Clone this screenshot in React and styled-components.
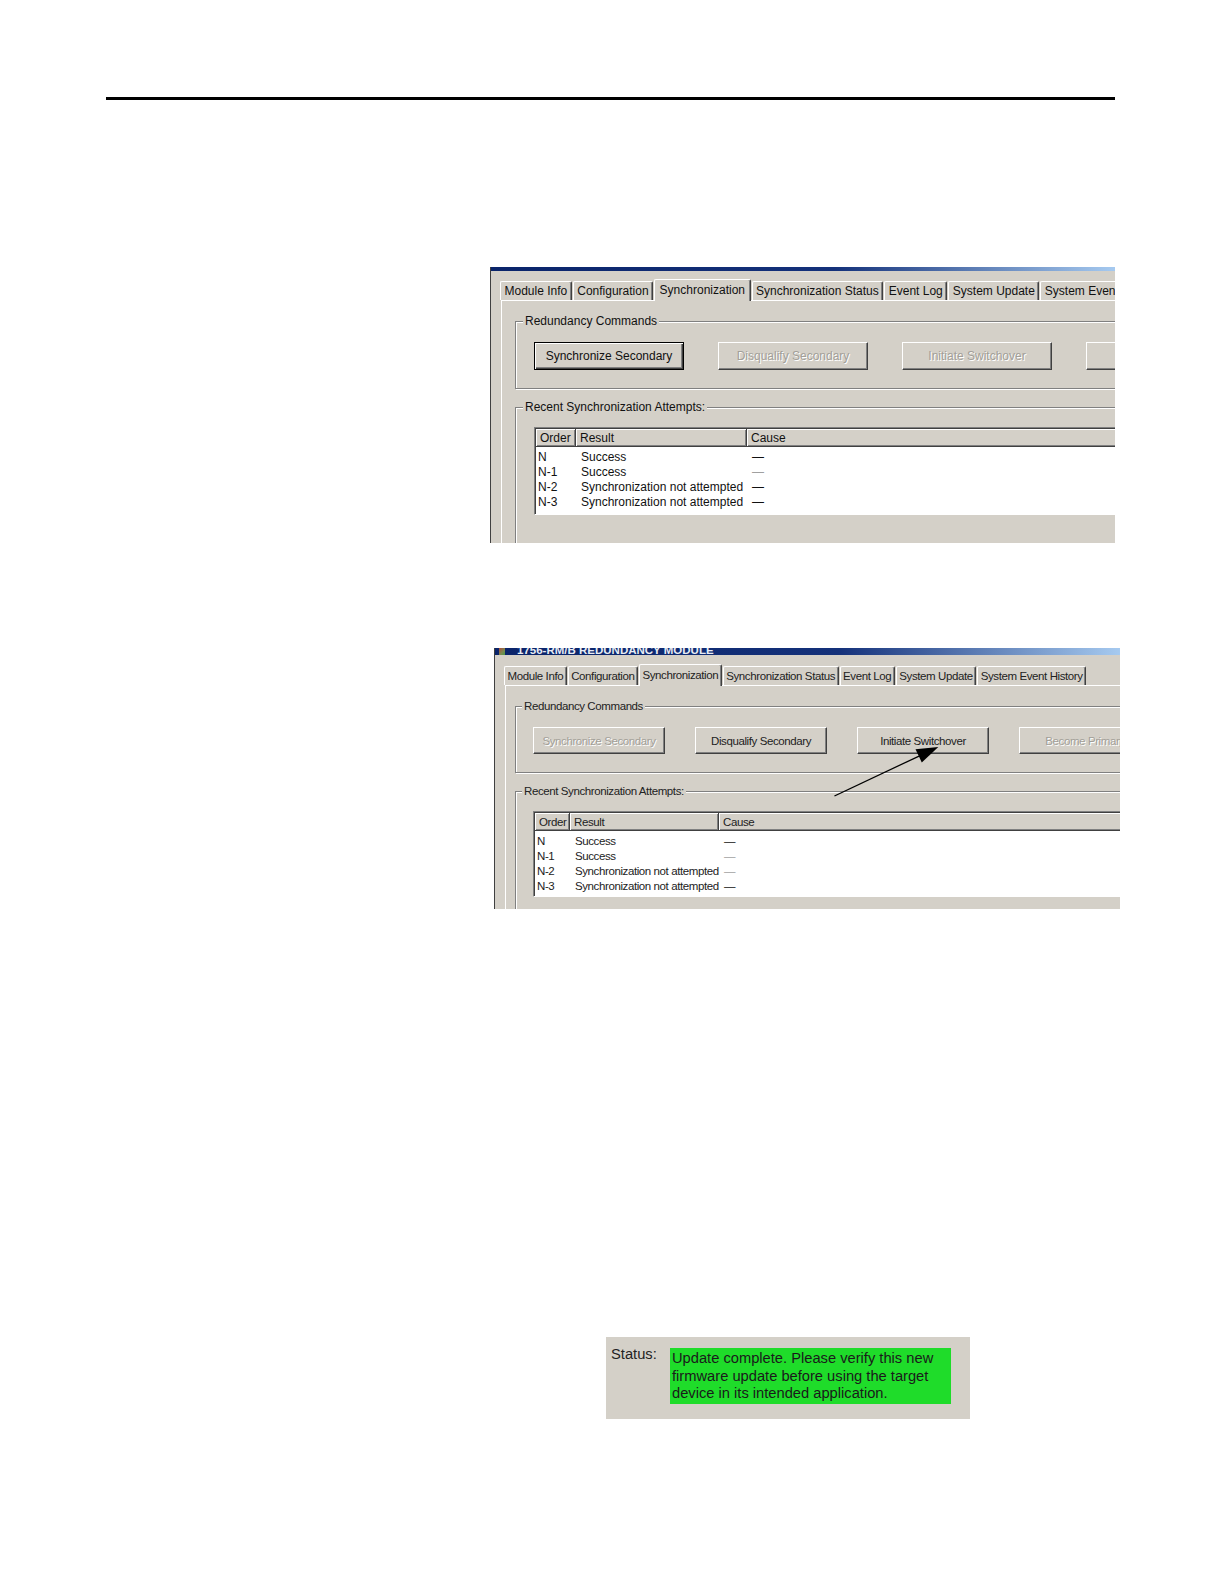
import React from 'react';
import styled, { createGlobalStyle } from 'styled-components';

const GlobalStyle = createGlobalStyle`
  html, body {
    margin: 0;
    padding: 0;
    background: #fff;
  }
  body {
    font-family: "Liberation Sans", Arial, sans-serif;
  }
`;

const Page = styled.div`
  width: 1224px;
  height: 1584px;
  box-sizing: border-box;
  padding-top: 97px;
  background: #fff;
  display: flex;
  flex-direction: column;
  align-items: flex-start;
`;

const Rule = styled.div`
  margin-left: 106px;
  width: 1009px;
  height: 3px;
  background: #000;
`;

const Dialog = styled.div`
  position: relative;
  margin-left: ${p => p.$left}px;
  margin-top: ${p => p.$top}px;
  width: ${p => p.$w}px;
  height: ${p => p.$h}px;
  box-sizing: border-box;
  overflow: hidden;
  background: #d4d0c8;
  border-left: 1px solid #404040;
  font-family: "Liberation Sans", Arial, sans-serif;
  font-size: ${p => p.$font}px;
  letter-spacing: ${p => p.$ls}px;
  color: ${p => p.$ink};
`;

const TitleBar = styled.div`
  height: ${p => p.$h}px;
  display: flex;
  align-items: flex-end;
  gap: 12px;
  padding-left: 4px;
  overflow: hidden;
  background: linear-gradient(90deg, #0a246a 0%, #14317a 55%, #a6caf0 100%);
`;

const TitleIcon = styled.span`
  flex-shrink: 0;
  width: 6px;
  height: 7px;
  background: linear-gradient(135deg, #b04a3a 0%, #7a8a50 60%, #4a9a48 100%);
`;

const TitleText = styled.span`
  margin-bottom: -1px;
  font-size: 11.5px;
  font-weight: bold;
  line-height: 11.5px;
  letter-spacing: 0;
  color: #e8ecf4;
  white-space: nowrap;
`;

const TabStrip = styled.div`
  display: flex;
  align-items: flex-end;
  height: 21px;
  margin-top: ${p => p.$mt}px;
  padding-left: 9px;
`;

const Tab = styled.div`
  position: relative;
  z-index: ${p => (p.$active ? 1 : 0)};
  flex-shrink: 0;
  box-sizing: border-box;
  height: ${p => (p.$active ? 22 : 19)}px;
  margin-bottom: ${p => (p.$active ? -1 : 0)}px;
  margin-right: 1px;
  padding: 0 ${p => p.$pad}px ${p => (p.$active ? 2 : 0)}px;
  display: flex;
  align-items: center;
  white-space: nowrap;
  background: #d4d0c8;
  border-top: 1px solid #fff;
  border-left: 1px solid #fff;
  border-right: 1px solid #404040;
  border-radius: 2px 2px 0 0;
  box-shadow: inset -1px 0 0 #808080;
`;

const Panel = styled.div`
  margin-left: 10px;
  height: 400px;
  padding-left: ${p => p.$pad}px;
  border-top: 1px solid #fff;
  border-left: 1px solid #fff;
`;

const Group = styled.div`
  width: 800px;
  margin-top: ${p => p.$mt}px;
  border: 1px solid #808080;
  box-shadow: inset 1px 1px 0 #fff, 1px 1px 0 #fff;
`;

const Legend = styled.div`
  width: fit-content;
  height: 14px;
  margin: -8px 0 0 ${p => p.$off}px;
  padding: 0 ${p => p.$pad}px;
  line-height: 14px;
  white-space: nowrap;
  background: #d4d0c8;
`;

const ButtonRow = styled.div`
  display: flex;
  gap: ${p => p.$gap}px;
  padding: 14px 0 18px ${p => p.$pl}px;
`;

const CmdButton = styled.button`
  flex-shrink: 0;
  width: ${p => p.$w}px;
  height: ${p => p.$h}px;
  box-sizing: border-box;
  padding: 0;
  display: flex;
  align-items: center;
  justify-content: center;
  white-space: nowrap;
  font: inherit;
  letter-spacing: inherit;
  background: #d4d0c8;
  border: 1px solid;
  border-color: ${p => (p.$default ? '#000' : '#fff #404040 #404040 #fff')};
  box-shadow: ${p =>
    p.$default
      ? 'inset 1px 1px 0 #fff, inset -1px -1px 0 #404040, inset -2px -2px 0 #808080'
      : 'inset -1px -1px 0 #808080'};
  color: ${p => (p.$disabled ? '#a29f98' : 'inherit')};
  text-shadow: ${p => (p.$disabled ? '1px 1px 0 #fff' : 'none')};
`;

const ListBody = styled.div`
  padding: 13px 0 40px ${p => p.$pl}px;
`;

const ListView = styled.div`
  width: 800px;
  height: ${p => p.$h}px;
  box-sizing: border-box;
  padding: 1px 0 0 1px;
  background: #fff;
  border: 1px solid;
  border-color: #808080 #fff #fff #808080;
  box-shadow: inset 1px 1px 0 #404040;
`;

const HeaderRow = styled.div`
  display: grid;
  grid-template-columns: ${p => p.$cols};
  height: 18px;
`;

const HeaderCell = styled.div`
  box-sizing: border-box;
  display: flex;
  align-items: center;
  padding-left: 4px;
  white-space: nowrap;
  background: #d4d0c8;
  border-right: 1px solid #404040;
  border-bottom: 1px solid #404040;
  box-shadow: inset 1px 1px 0 #fff, inset -1px -1px 0 #808080;
`;

const Rows = styled.div`
  padding-top: 3px;
`;

const Row = styled.div`
  display: grid;
  grid-template-columns: ${p => p.$cols};
  height: 15px;
  line-height: 15px;
`;

const Cell = styled.div`
  padding-left: ${p => (p.$first ? 2 : 5)}px;
  white-space: nowrap;
  color: ${p => p.$color || 'inherit'};
`;

const ArrowLayer = styled.svg`
  position: absolute;
  left: 0;
  top: 0;
  width: 100%;
  height: 100%;
  pointer-events: none;
`;

const StatusBox = styled.div`
  margin-left: 606px;
  margin-top: 428px;
  width: 364px;
  height: 82px;
  box-sizing: border-box;
  padding: 9px 0 0 5px;
  display: flex;
  align-items: flex-start;
  background: #d4d0c8;
  font-family: "Liberation Sans", Arial, sans-serif;
  font-size: 14.7px;
  color: #222;
`;

const StatusLabel = styled.div`
  width: 59px;
  flex-shrink: 0;
  line-height: 17px;
`;

const StatusMessage = styled.div`
  width: 281px;
  height: 56px;
  box-sizing: border-box;
  margin-top: 2px;
  padding: 2px;
  line-height: 17.5px;
  background: #1fdc2a;
  color: #1a1a1a;
`;

const tabs = [
  'Module Info',
  'Configuration',
  'Synchronization',
  'Synchronization Status',
  'Event Log',
  'System Update',
  'System Event History',
];

const attempts = [
  { order: 'N', result: 'Success' },
  { order: 'N-1', result: 'Success' },
  { order: 'N-2', result: 'Synchronization not attempted' },
  { order: 'N-3', result: 'Synchronization not attempted' },
];

const dialogs = [
  {
    id: 'before',
    left: 490, top: 167, width: 625, height: 276,
    titleH: 4, title: null,
    font: 12, ls: 0, ink: '#111',
    stripTop: 8, tabPad: 3.5, selPad: 4.5,
    panelPad: 13, groupPad: 18, legendOff: 7, legendPad: 2,
    btnW: 150, btnH: 28, btnGap: 34,
    buttons: [
      { label: 'Synchronize Secondary', def: true },
      { label: 'Disqualify Secondary', disabled: true },
      { label: 'Initiate Switchover', disabled: true },
      { label: 'Become Primary', disabled: true },
    ],
    cols: '40px 171px 1fr',
    listH: 88,
    dashes: ['#111', '#a0a0a0', '#111', '#111'],
    arrow: false,
  },
  {
    id: 'after',
    left: 494, top: 105, width: 626, height: 261,
    titleH: 7, title: '1756-RM/B REDUNDANCY MODULE',
    font: 11.5, ls: -0.4, ink: '#222',
    stripTop: 9, tabPad: 2.5, selPad: 2.5,
    panelPad: 9, groupPad: 17, legendOff: 6, legendPad: 2,
    btnW: 132, btnH: 27, btnGap: 30,
    buttons: [
      { label: 'Synchronize Secondary', disabled: true },
      { label: 'Disqualify Secondary' },
      { label: 'Initiate Switchover' },
      { label: 'Become Primary', disabled: true },
    ],
    cols: '35px 149px 1fr',
    listH: 86,
    dashes: ['#111', '#a0a0a0', '#a0a0a0', '#111'],
    arrow: true,
  },
];

function RedundancyDialog({ d }) {
  return (
    <Dialog
      $left={d.left}
      $top={d.top}
      $w={d.width}
      $h={d.height}
      $font={d.font}
      $ls={d.ls}
      $ink={d.ink}
    >
      <TitleBar $h={d.titleH}>
        {d.title && <TitleIcon />}
        {d.title && <TitleText>{d.title}</TitleText>}
      </TitleBar>

      <TabStrip $mt={d.stripTop}>
        {tabs.map((t, i) => (
          <Tab key={t} $active={i === 2} $pad={i === 2 ? d.selPad : d.tabPad}>
            {t}
          </Tab>
        ))}
      </TabStrip>

      <Panel $pad={d.panelPad}>
        <Group $mt={20}>
          <Legend $off={d.legendOff} $pad={d.legendPad}>Redundancy Commands</Legend>
          <ButtonRow $gap={d.btnGap} $pl={d.groupPad}>
            {d.buttons.map(b => (
              <CmdButton
                key={b.label}
                $w={d.btnW}
                $h={d.btnH}
                $default={b.def}
                $disabled={b.disabled}
              >
                {b.label}
              </CmdButton>
            ))}
          </ButtonRow>
        </Group>

        <Group $mt={18}>
          <Legend $off={d.legendOff} $pad={d.legendPad}>Recent Synchronization Attempts:</Legend>
          <ListBody $pl={d.groupPad}>
            <ListView $h={d.listH}>
              <HeaderRow $cols={d.cols}>
                <HeaderCell>Order</HeaderCell>
                <HeaderCell>Result</HeaderCell>
                <HeaderCell>Cause</HeaderCell>
              </HeaderRow>
              <Rows>
                {attempts.map((a, i) => (
                  <Row key={a.order} $cols={d.cols}>
                    <Cell $first>{a.order}</Cell>
                    <Cell>{a.result}</Cell>
                    <Cell $color={d.dashes[i]}>—</Cell>
                  </Row>
                ))}
              </Rows>
            </ListView>
          </ListBody>
        </Group>
      </Panel>

      {d.arrow && (
        <ArrowLayer viewBox={`0 0 ${d.width} ${d.height}`}>
          <line x1="340" y1="148" x2="428" y2="106.5" stroke="#000" strokeWidth="1.3" />
          <polygon points="444,99 427.5,114.5 421.2,101.2" fill="#000" />
        </ArrowLayer>
      )}
    </Dialog>
  );
}

export default function App() {
  return (
    <>
      <GlobalStyle />
      <Page>
        <Rule />
        {dialogs.map(d => (
          <RedundancyDialog key={d.id} d={d} />
        ))}
        <StatusBox>
          <StatusLabel>Status:</StatusLabel>
          <StatusMessage>
            Update complete. Please verify this new firmware update before using the target
            device in its intended application.
          </StatusMessage>
        </StatusBox>
      </Page>
    </>
  );
}
